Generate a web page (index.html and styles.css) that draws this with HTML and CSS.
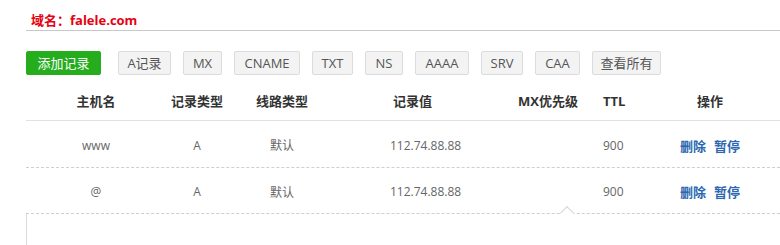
FILE: index.html
```html
<!DOCTYPE html>
<html>
<head>
<meta charset="utf-8">
<link rel="stylesheet" href="styles.css">
</head>
<body>
<div class="wrap">
  <div class="title"><span class="title-text">域名：falele.com</span></div>
  <div class="toolbar">
    <span class="btn btn-primary">添加记录</span>
    <span class="btn w-a">A记录</span>
    <span class="btn w-mx">MX</span>
    <span class="btn w-cname">CNAME</span>
    <span class="btn w-txt">TXT</span>
    <span class="btn w-ns">NS</span>
    <span class="btn w-aaaa">AAAA</span>
    <span class="btn w-srv">SRV</span>
    <span class="btn w-caa">CAA</span>
    <span class="btn w-all">查看所有</span>
  </div>
  <div class="table">
    <div class="row head">
      <div class="c c1">主机名</div>
      <div class="c c2">记录类型</div>
      <div class="c c3">线路类型</div>
      <div class="c c4">记录值</div>
      <div class="c c5">MX优先级</div>
      <div class="c c6">TTL</div>
      <div class="c c7">操作</div>
    </div>
    <div class="row body first">
      <div class="c c1">www</div>
      <div class="c c2">A</div>
      <div class="c c3">默认</div>
      <div class="c c4">112.74.88.88</div>
      <div class="c c5"></div>
      <div class="c c6">900</div>
      <div class="c c7"><a class="act">删除</a><a class="act">暂停</a></div>
    </div>
    <div class="row body">
      <div class="c c1">@</div>
      <div class="c c2">A</div>
      <div class="c c3">默认</div>
      <div class="c c4">112.74.88.88</div>
      <div class="c c5"></div>
      <div class="c c6">900</div>
      <div class="c c7"><a class="act">删除</a><a class="act">暂停</a></div>
    </div>
  </div>
  <div class="panel"><span class="notch"></span></div>
</div>
</body>
</html>
```

FILE: styles.css
```css
html, body {
  margin: 0;
  padding: 0;
  background: #fff;
}
body {
  font-family: "Open Sans", "Noto Sans CJK SC", sans-serif;
  color: #666;
}
.wrap {
  padding-left: 26px;
}
.title {
  height: 31px;
  border-bottom: 1px solid #c8c8c8;
  box-sizing: border-box;
  padding-left: 5px;
  padding-top: 8px;
}
.title-text {
  color: #e60012;
  font-weight: bold;
  font-size: 13px;
  line-height: 20px;
}
.toolbar {
  display: flex;
  gap: 12px;
  margin-top: 20px;
  align-items: center;
}
.btn {
  height: 24px;
  box-sizing: border-box;
  border: 1px solid #dcdcdc;
  background: #f3f3f3;
  border-radius: 2px;
  color: #555;
  font-size: 13px;
  line-height: 22px;
  padding: 0;
  text-align: center;
}
.btn-primary {
  width: 75px;
  background: #25ad1e;
  border-color: #25ad1e;
  color: #fff;
  margin-right: 5px;
}
.w-a { width: 53px; }
.w-mx { width: 39px; }
.w-cname { width: 66px; }
.w-txt { width: 41px; }
.w-ns { width: 38px; }
.w-aaaa { width: 54px; }
.w-srv { width: 42px; }
.w-caa { width: 45px; }
.w-all { width: 69px; }
.row {
  display: grid;
  grid-template-columns: 140px 62px 108px 170px 84px 50px 140px;
  align-items: center;
}
.head {
  height: 46px;
  border-bottom: 1px solid #e2e2e2;
  font-weight: bold;
  font-size: 13px;
  color: #333;
  padding-top: 6px;
  box-sizing: border-box;
}
.body {
  height: 46px;
  border-bottom: 1px dashed #cfcfcf;
  font-size: 12px;
  color: #666;
  padding-top: 2px;
  box-sizing: border-box;
}
.body.first {
  height: 47px;
}
.c {
  text-align: center;
}
.body .c4 {
  text-align: left;
  padding-left: 54px;
}
.head .c4 {
  text-align: left;
  padding-left: 57px;
}
.c6 {
  text-align: left;
  padding-left: 13px;
}
.act {
  color: #2b67b0;
  font-size: 13px;
  font-weight: bold;
  margin: 0 4px;
}
.panel {
  position: relative;
  height: 40px;
  border-left: 1px solid #dcdcdc;
}
.notch {
  position: absolute;
  left: 535px;
  top: -6px;
  width: 9px;
  height: 9px;
  background: #fff;
  border-top: 1px solid #d6d6d6;
  border-left: 1px solid #d6d6d6;
  transform: rotate(45deg);
}
```
